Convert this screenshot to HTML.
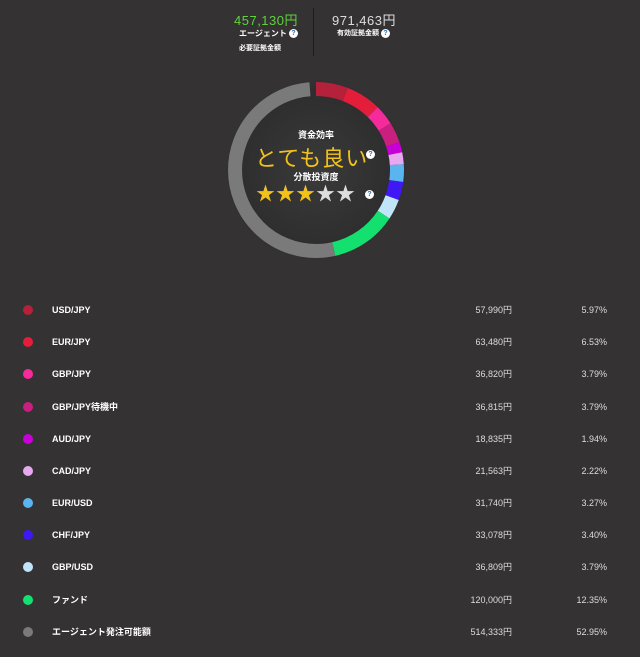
<!DOCTYPE html>
<html><head><meta charset="utf-8"><style>
html,body{margin:0;padding:0;background:#343233;width:640px;height:657px;overflow:hidden;font-family:"Liberation Sans","Noto Sans CJK JP",sans-serif;color:#fff}
.abs{position:absolute}
.q{display:inline-block;width:9px;height:9px;border-radius:50%;background:#fff;color:#2a6fb5;font-size:7px;font-weight:bold;text-align:center;line-height:9px;vertical-align:middle}
.row{position:absolute;left:0;width:640px;height:20px;font-size:9px;font-weight:bold;line-height:12px}
.dot{position:absolute;left:23px;top:5px;width:10px;height:10px;border-radius:50%}
.lab{position:absolute;left:52px;top:4px;height:12px;line-height:12px}
.amt{position:absolute;right:128px;top:4px;color:#ddd;font-weight:normal;height:12px;line-height:12px}
.pct{position:absolute;right:33px;top:4px;color:#ddd;font-weight:normal;height:12px;line-height:12px}
</style></head><body>
<div class="abs" style="left:234px;top:10px;font-size:13px;color:#5fd23a;letter-spacing:0.5px">457,130円</div>
<div class="abs" style="left:239px;top:28px;font-size:8px;font-weight:bold">エージェント <span class="q">?</span></div>
<div class="abs" style="left:239px;top:43px;font-size:7px;font-weight:bold">必要証拠金額</div>
<div class="abs" style="left:313px;top:8px;width:1px;height:48px;background:#1e1c1f"></div>
<div class="abs" style="left:332px;top:10px;font-size:13px;color:#ddd;letter-spacing:0.5px">971,463円</div>
<div class="abs" style="left:337px;top:28px;font-size:7px;font-weight:bold">有効証拠金額 <span class="q">?</span></div>

<div class="abs" style="left:226px;top:80px;width:180px;height:180px;border-radius:50%;background:radial-gradient(circle,#3a3a3a 0,#2e2e2e 60%,#343233 72%)"></div>
<svg class="abs" style="left:226px;top:80px" width="180" height="180" viewBox="0 0 180 180">
<g transform="rotate(-90 90 90)" fill="none" stroke-width="14">
<circle cx="90" cy="90" r="81" stroke="#b5203a" stroke-dasharray="30.01 600" stroke-dashoffset="0"/>
<circle cx="90" cy="90" r="81" stroke="#e41e3a" stroke-dasharray="32.82 600" stroke-dashoffset="-30.01"/>
<circle cx="90" cy="90" r="81" stroke="#f52a9b" stroke-dasharray="19.05 600" stroke-dashoffset="-62.83"/>
<circle cx="90" cy="90" r="81" stroke="#c91f7f" stroke-dasharray="19.05 600" stroke-dashoffset="-81.88"/>
<circle cx="90" cy="90" r="81" stroke="#c800d8" stroke-dasharray="9.75 600" stroke-dashoffset="-100.93"/>
<circle cx="90" cy="90" r="81" stroke="#e8a8f0" stroke-dasharray="11.16 600" stroke-dashoffset="-110.68"/>
<circle cx="90" cy="90" r="81" stroke="#5ab4f0" stroke-dasharray="16.44 600" stroke-dashoffset="-121.84"/>
<circle cx="90" cy="90" r="81" stroke="#4018f5" stroke-dasharray="17.09 600" stroke-dashoffset="-138.28"/>
<circle cx="90" cy="90" r="81" stroke="#c0e4f8" stroke-dasharray="19.05 600" stroke-dashoffset="-155.37"/>
<circle cx="90" cy="90" r="81" stroke="#14e070" stroke-dasharray="62.08 600" stroke-dashoffset="-174.42"/>
<circle cx="90" cy="90" r="81" stroke="#7a7a7a" stroke-dasharray="266.15 600" stroke-dashoffset="-236.5"/>
</g></svg>
<div class="abs" style="left:226px;top:128px;width:180px;text-align:center;font-size:9px;font-weight:bold">資金効率</div>
<div class="abs" style="left:255px;top:141px;font-size:22px;color:#f2c21a;letter-spacing:1px">とても良い</div>
<div class="abs" style="left:366px;top:146px"><span class="q">?</span></div>
<div class="abs" style="left:226px;top:170px;width:180px;text-align:center;font-size:9px;font-weight:bold">分散投資度</div>
<div class="abs" style="left:256px;top:184px;font-size:19px;letter-spacing:1px;line-height:22px"><span style="color:#f2c21a">★★★</span><span style="color:#ddd">★★</span></div>
<div class="abs" style="left:365px;top:186px"><span class="q">?</span></div>

<div class="row" style="top:300px"><div class="dot" style="background:#b5203a"></div><div class="lab">USD/JPY</div><div class="amt">57,990円</div><div class="pct">5.97%</div></div>
<div class="row" style="top:332px"><div class="dot" style="background:#e41e3a"></div><div class="lab">EUR/JPY</div><div class="amt">63,480円</div><div class="pct">6.53%</div></div>
<div class="row" style="top:364px"><div class="dot" style="background:#f52a9b"></div><div class="lab">GBP/JPY</div><div class="amt">36,820円</div><div class="pct">3.79%</div></div>
<div class="row" style="top:397px"><div class="dot" style="background:#c91f7f"></div><div class="lab">GBP/JPY待機中</div><div class="amt">36,815円</div><div class="pct">3.79%</div></div>
<div class="row" style="top:429px"><div class="dot" style="background:#c800d8"></div><div class="lab">AUD/JPY</div><div class="amt">18,835円</div><div class="pct">1.94%</div></div>
<div class="row" style="top:461px"><div class="dot" style="background:#e8a8f0"></div><div class="lab">CAD/JPY</div><div class="amt">21,563円</div><div class="pct">2.22%</div></div>
<div class="row" style="top:493px"><div class="dot" style="background:#5ab4f0"></div><div class="lab">EUR/USD</div><div class="amt">31,740円</div><div class="pct">3.27%</div></div>
<div class="row" style="top:525px"><div class="dot" style="background:#4018f5"></div><div class="lab">CHF/JPY</div><div class="amt">33,078円</div><div class="pct">3.40%</div></div>
<div class="row" style="top:557px"><div class="dot" style="background:#c0e4f8"></div><div class="lab">GBP/USD</div><div class="amt">36,809円</div><div class="pct">3.79%</div></div>
<div class="row" style="top:590px"><div class="dot" style="background:#14e070"></div><div class="lab">ファンド</div><div class="amt">120,000円</div><div class="pct">12.35%</div></div>
<div class="row" style="top:622px"><div class="dot" style="background:#7a7a7a"></div><div class="lab">エージェント発注可能額</div><div class="amt">514,333円</div><div class="pct">52.95%</div></div>
</body></html>
